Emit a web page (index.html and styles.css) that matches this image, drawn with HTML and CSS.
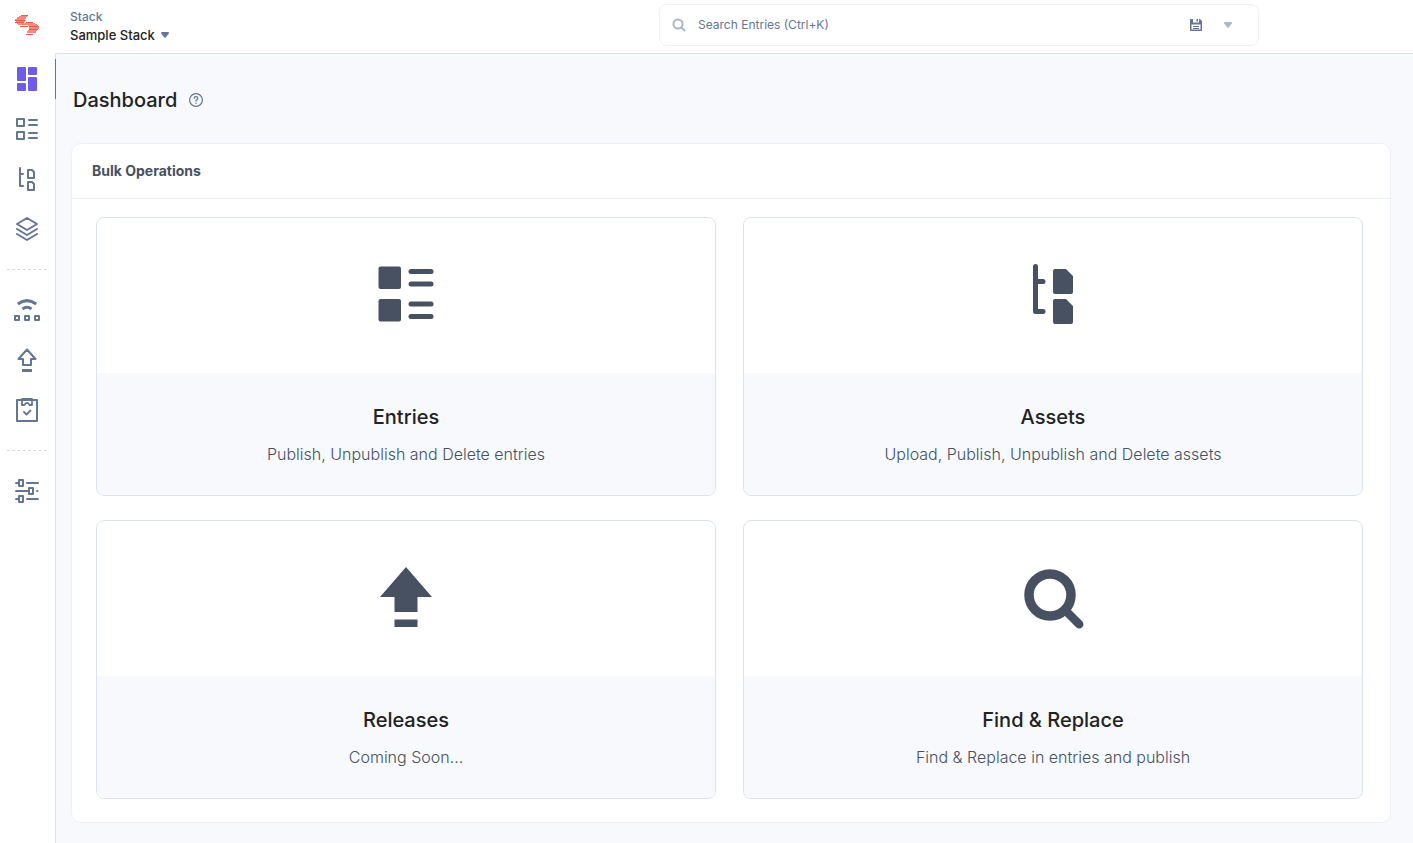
FILE: index.html
```html
<!DOCTYPE html>
<html lang="en">
<head>
<meta charset="utf-8">
<title>Dashboard</title>
<link rel="stylesheet" href="styles.css">
</head>
<body>
<header class="topbar">
  <a class="logo" href="#" aria-label="Home">
    <svg width="26" height="24" viewBox="0 0 26 24">
      <g fill="#ea5a4b"><path d="M7 2h7v1H7zM1 7h10v1H1zM12 9h7v1h-7zM6 13h8v1H6zM15 13h10v1H15zM15 16h9v1h-9zM12 21h7v1h-7zM1 9h9v1H1z"/></g>
      <g fill="#f58a7c"><path d="M5 3h8v1H5zM3 4h9v2H3zM1 6h10v1H1zM2 8h9v1H2zM3 10h18v1H3zM4 11h19v1H4zM14 12h10v1H14zM15 14h10v2h-10zM14 17h9v1h-9zM13 18h9v2h-9z"/></g>
    </svg>
  </a>
  <button class="stack" type="button">
    <span class="stack-label">Stack</span>
    <span class="stack-name">Sample Stack
      <svg width="8" height="6" viewBox="0 0 8 6"><path d="M1 0h6q1 0 1 1.200L4.700 5.500q-.7.7-1.400 0L0 1.200Q0 0 1 0z" fill="#647696"/></svg>
    </span>
  </button>
  <form class="search">
    <svg width="14" height="14" viewBox="0 0 14 14" fill="none" stroke="#a9b6cb" stroke-width="2" stroke-linecap="round"><circle cx="6" cy="6" r="4.600"/><path d="M9.600 9.600l2.900 2.900"/></svg>
    <input class="search-input" type="text" placeholder="Search Entries (Ctrl+K)" aria-label="Search entries">
    <button class="icon-button" type="button" aria-label="Save search">
      <svg width="12" height="12" viewBox="0 0 12 12"><path d="M1 0h9l2 2v9q0 1-1 1H1q-1 0-1-1V1q0-1 1-1z" fill="#647696"/><path d="M3 0h6v3.500H3zM1.500 5.500h9v5h-9z" fill="#fff"/><path d="M6.500 0H8v2.500H6.500zM3 7h6v1H3zM3 9h6v1H3z" fill="#647696"/></svg>
    </button>
    <button class="icon-button" type="button" aria-label="Search options">
      <svg width="8" height="6" viewBox="0 0 8 6"><path d="M1 0h6q1 0 1 1.200L4.700 5.500q-.7.7-1.400 0L0 1.200Q0 0 1 0z" fill="#a9b6cb"/></svg>
    </button>
  </form>
</header>
<div class="shell">
  <nav class="sidebar" aria-label="Main">
    <a class="nav-item active" href="#" aria-label="Dashboard"><svg width="28" height="28" viewBox="0 0 28 28" fill="#6c5ce7"><rect x="4" y="2" width="9" height="14" rx="1"/><rect x="15" y="2" width="9" height="8" rx="1"/><rect x="4" y="18" width="9" height="8" rx="1"/><rect x="15" y="12" width="9" height="14" rx="1"/></svg></a>
    <a class="nav-item" href="#" aria-label="Entries"><svg class="line" width="28" height="28" viewBox="0 0 28 28"><path d="M4 4h7v7H4zM4 17h7v7H4zM16 5h8M16 10h8M16 18h8M16 23h8"/></svg></a>
    <a class="nav-item" href="#" aria-label="Assets"><svg class="line" width="28" height="28" viewBox="0 0 28 28"><path d="M7 3v18h3M7 9h3M15 5h4l2 2v6h-6zM15 17h4l2 2v6h-6z"/></svg></a>
    <a class="nav-item" href="#" aria-label="Content models"><svg class="line layers" width="28" height="28" viewBox="0 0 28 28"><path d="M14 3l10 6-10 6L4 9zM4 14l10 6 10-6M4 19l10 6 10-6"/></svg></a>
    <hr class="nav-divider">
    <a class="nav-item" href="#" aria-label="Publish queue"><svg class="line" width="28" height="28" viewBox="0 0 28 28"><path d="M2 20h4v4H2zM12 20h4v4h-4zM22 20h4v4h-4z"/><path d="M4.800 8q9.200-6.800 18.400 0M9.500 13q4.500-3.400 9 0" stroke-width="3" stroke-linecap="butt"/></svg></a>
    <a class="nav-item" href="#" aria-label="Releases"><svg class="line" width="28" height="28" viewBox="0 0 28 28"><path d="M14 3.500l8.500 9.500H18v6h-8v-6H5.500z"/><path d="M9 24.500h10" stroke-width="3" stroke-linecap="butt"/></svg></a>
    <a class="nav-item" href="#" aria-label="Tasks"><svg class="line" width="28" height="28" viewBox="0 0 28 28"><path d="M4 4h20v21H4z"/><path d="M9 3h10v6h-2.500q-.7-2-2.500-2t-2.500 2H9zM11 16l2.500 2.500L17.500 14.500" stroke-width="1.800"/></svg></a>
    <hr class="nav-divider">
    <a class="nav-item" href="#" aria-label="Settings"><svg class="line" width="28" height="28" viewBox="0 0 28 28"><path d="M3 6h3M14 6h11M3 14h12M24 14h.5M3 22h3M14 22h11M6 3h4v6H6zM16 11h4v6h-4zM6 19h4v6H6z"/></svg></a>
  </nav>
  <main class="main">
    <div class="page-head">
      <h1 class="page-title">Dashboard</h1>
      <button class="help" type="button" aria-label="Help"><svg width="14" height="14" viewBox="0 0 14 14" fill="none" stroke="#647696" stroke-width="1.200" stroke-linecap="round"><circle cx="7" cy="7" r="6.400"/><path d="M5.200 5.500q0-1.800 1.800-1.800t1.800 1.600q0 1-1 1.500-.8.500-.8 1.400M7 10.200v.2"/></svg></button>
    </div>
    <section class="panel">
      <h2 class="panel-title">Bulk Operations</h2>
      <div class="cards">
        <a class="card" href="#">
          <span class="card-icon"><svg width="60" height="60" viewBox="0 0 60 60"><rect x="2.500" y="2.500" width="22.500" height="22.500" rx="2"/><rect x="2.500" y="35" width="22.500" height="22.500" rx="2"/><rect x="32.500" y="5" width="25" height="5" rx="2.500"/><rect x="32.500" y="17.500" width="25" height="5" rx="2.500"/><rect x="32.500" y="37.500" width="25" height="5" rx="2.500"/><rect x="32.500" y="50" width="25" height="5" rx="2.500"/></svg></span>
          <span class="card-body"><span class="card-title">Entries</span><span class="card-text">Publish, Unpublish and Delete entries</span></span>
        </a>
        <a class="card" href="#">
          <span class="card-icon"><svg width="60" height="60" viewBox="0 0 60 60"><path d="M12.500 2.500v45H20M12.500 17.500H20" fill="none" stroke="#475161" stroke-width="5" stroke-linecap="round" stroke-linejoin="round"/><path d="M32 5h11l7 7v16q0 2-2 2H32q-2 0-2-2V7q0-2 2-2zM32 35h11l7 7v16q0 2-2 2H32q-2 0-2-2V37q0-2 2-2z"/></svg></span>
          <span class="card-body"><span class="card-title">Assets</span><span class="card-text">Upload, Publish, Unpublish and Delete assets</span></span>
        </a>
        <a class="card" href="#">
          <span class="card-icon"><svg width="60" height="60" viewBox="0 0 60 60"><path d="M30 0l26 30H41.500v15h-23V30H4zM18.500 52.500h23V60h-23z"/></svg></span>
          <span class="card-body"><span class="card-title">Releases</span><span class="card-text">Coming Soon...</span></span>
        </a>
        <a class="card" href="#">
          <span class="card-icon"><svg width="60" height="60" viewBox="0 0 60 60"><g fill="none" stroke="#475161" stroke-linecap="round"><circle cx="27" cy="28" r="21" stroke-width="9.500"/><path d="M42 43l14.200 14.200" stroke-width="8.500"/></g></svg></span>
          <span class="card-body"><span class="card-title">Find &amp; Replace</span><span class="card-text">Find &amp; Replace in entries and publish</span></span>
        </a>
      </div>
    </section>
  </main>
</div>
</body>
</html>
```
FILE: styles.css
```css
* {
  box-sizing: border-box;
}

body {
  margin: 0;
  min-height: 100vh;
  display: flex;
  flex-direction: column;
  background: #fff;
  color: #222;
  font-family: Inter, "Liberation Sans", sans-serif;
}

button {
  padding: 0;
  border: 0;
  background: none;
  font: inherit;
  color: inherit;
  text-align: left;
}

svg {
  display: block;
  overflow: visible;
}

.topbar {
  display: grid;
  grid-template-columns: 55px 1fr minmax(300px, 600px);
  align-items: center;
  height: 53px;
  padding-right: 154px;
}

.logo {
  padding: 0 0 4px 14px;
}

.stack {
  padding: 0 0 2px 15px;
  font-weight: 500;
}

.stack-label {
  display: block;
  font-size: 12px;
  line-height: 18px;
  color: #647696;
}

.stack-name {
  display: flex;
  align-items: center;
  gap: 6px;
  font-size: 13px;
  line-height: 18px;
}

.search {
  display: flex;
  align-items: center;
  height: 42px;
  margin-bottom: 4px;
  padding: 0 20px 0 12px;
  border: 1px solid #edf1f7;
  border-radius: 8px;
}

.search-input {
  flex: 1;
  min-width: 0;
  padding: 0 12px;
  border: 0;
  outline: 0;
  background: none;
  font: 400 12px/18px Inter, "Liberation Sans", sans-serif;
}

.search-input::placeholder {
  color: #647696;
}

.icon-button {
  display: flex;
  justify-content: center;
  width: 20px;
}

.icon-button + .icon-button {
  margin-left: 12px;
}

.shell {
  flex: 1;
  display: flex;
}

.sidebar {
  width: 55px;
  padding-top: 1px;
}

.nav-item {
  display: flex;
  align-items: center;
  height: 50px;
  padding-left: 13px;
}

.nav-item.active {
  position: relative;
  margin-right: -1px;
  background: linear-gradient(#6c5ce7, #6c5ce7) right center / 1px 40px no-repeat;
}

.line {
  fill: none;
  stroke: #647696;
  stroke-width: 2;
  stroke-linecap: round;
  stroke-linejoin: round;
}

.nav-divider {
  margin: 15px 8px 15px 7px;
  border: 0;
  border-top: 1px dashed #d3d8e2;
}

.main {
  flex: 1;
  min-width: 0;
  padding: 30px 22px 20px 15px;
  border-top: 1px solid #dde3ee;
  border-left: 1px solid #dde3ee;
  background: #f7f9fc;
}

.page-head {
  display: flex;
  align-items: center;
  gap: 12px;
  height: 32px;
  margin: 0 0 27px 2px;
}

.page-title {
  margin: 0;
  font-size: 20px;
  line-height: 32px;
  font-weight: 500;
}

.panel {
  border: 1px solid #edf1f7;
  border-radius: 10px;
  background: #fff;
}

.panel-title {
  margin: 0;
  padding: 17px 20px;
  border-bottom: 1px solid #edf1f7;
  font-size: 14px;
  line-height: 20px;
  font-weight: 700;
  color: #475161;
}

.cards {
  display: grid;
  grid-template-columns: 1fr 1fr;
  gap: 24px 27px;
  padding: 18px 27px 23px 24px;
}

.card {
  display: flex;
  flex-direction: column;
  overflow: hidden;
  border: 1px solid #dde3ee;
  border-radius: 8px;
  color: #222;
  text-align: center;
  text-decoration: none;
}

.card-icon {
  display: flex;
  justify-content: center;
  padding: 46px 0 49px;
  fill: #475161;
}

.card-body {
  display: flex;
  flex-direction: column;
  gap: 9px;
  padding: 28px 16px 29px;
  background: #f7f9fc;
}

.card-title {
  font-size: 20px;
  line-height: 32px;
  font-weight: 500;
}

.card-text {
  font-size: 16px;
  line-height: 24px;
  font-weight: 300;
  color: #475161;
}
```
